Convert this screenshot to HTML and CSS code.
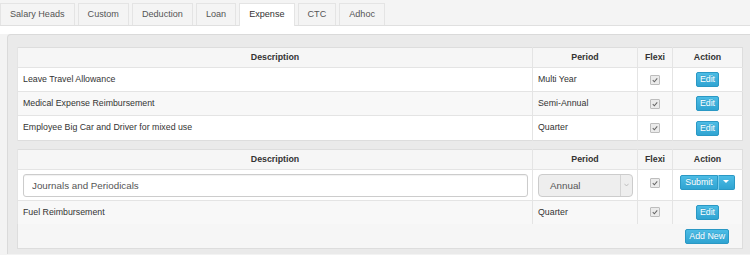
FILE: index.html
```html
<!DOCTYPE html>
<html lang="en">
<head>
    <meta charset="UTF-8">
    <title>Salary Heads - Expense</title>
    <link rel="stylesheet" href="styles.css">
</head>
<body>
    <ul class="tabs">
        <li>Salary Heads</li>
        <li>Custom</li>
        <li>Deduction</li>
        <li>Loan</li>
        <li class="active">Expense</li>
        <li>CTC</li>
        <li>Adhoc</li>
    </ul>

    <div class="tab-content">
        <div class="panel">
            <!-- Saved expense heads -->
            <table class="grid">
                <colgroup>
                    <col class="col-desc"><col class="col-period"><col class="col-flexi"><col class="col-action">
                </colgroup>
                <thead>
                    <tr><th>Description</th><th>Period</th><th>Flexi</th><th>Action</th></tr>
                </thead>
                <tbody>
                    <tr>
                        <td>Leave Travel Allowance</td>
                        <td>Multi Year</td>
                        <td class="center"><span class="check"><svg viewBox="0 0 10 10"><path d="M2.2 5.2 L4.2 7.2 L7.8 3"/></svg></span></td>
                        <td class="center"><span class="btn">Edit</span></td>
                    </tr>
                    <tr class="striped">
                        <td>Medical Expense Reimbursement</td>
                        <td>Semi-Annual</td>
                        <td class="center"><span class="check"><svg viewBox="0 0 10 10"><path d="M2.2 5.2 L4.2 7.2 L7.8 3"/></svg></span></td>
                        <td class="center"><span class="btn">Edit</span></td>
                    </tr>
                    <tr>
                        <td>Employee Big Car and Driver for mixed use</td>
                        <td>Quarter</td>
                        <td class="center"><span class="check"><svg viewBox="0 0 10 10"><path d="M2.2 5.2 L4.2 7.2 L7.8 3"/></svg></span></td>
                        <td class="center"><span class="btn">Edit</span></td>
                    </tr>
                </tbody>
            </table>

            <!-- Editable expense heads -->
            <table class="grid">
                <colgroup>
                    <col class="col-desc"><col class="col-period"><col class="col-flexi"><col class="col-action">
                </colgroup>
                <thead>
                    <tr><th>Description</th><th>Period</th><th>Flexi</th><th>Action</th></tr>
                </thead>
                <tbody>
                    <tr class="edit-row">
                        <td><input class="field" type="text" value="Journals and Periodicals"></td>
                        <td>
                            <div class="select">
                                <span class="select-value">Annual</span>
                                <span class="select-arrow"><svg viewBox="0 0 6 4"><path d="M0.5 0.5 L3 3.2 L5.5 0.5"/></svg></span>
                            </div>
                        </td>
                        <td class="center"><span class="check"><svg viewBox="0 0 10 10"><path d="M2.2 5.2 L4.2 7.2 L7.8 3"/></svg></span></td>
                        <td class="center">
                            <span class="btn-group">
                                <span class="btn btn-main">Submit</span><span class="btn btn-caret"><span class="caret"></span></span>
                            </span>
                        </td>
                    </tr>
                    <tr class="striped">
                        <td>Fuel Reimbursement</td>
                        <td>Quarter</td>
                        <td class="center"><span class="check"><svg viewBox="0 0 10 10"><path d="M2.2 5.2 L4.2 7.2 L7.8 3"/></svg></span></td>
                        <td class="center"><span class="btn">Edit</span></td>
                    </tr>
                    <tr class="footer-row">
                        <td colspan="4"><span class="btn">Add New</span></td>
                    </tr>
                </tbody>
            </table>
        </div>
    </div>
</body>
</html>
```

FILE: styles.css
```css
:root {
    --text-primary: #333333;
    --text-secondary: #555555;
    --border-color: #dddddd;
    --cell-border: #e4e4e4;
    --info-top: #4cbce5;
    --info-bottom: #30a4d2;
    --info-border: #2a98c4;
}

html, body {
    overflow: hidden;
}

body {
    margin: 0;
    font-family: 'Liberation Sans', Arial, sans-serif;
    font-size: 8.8px;
    color: var(--text-primary);
    background: #f3f3f3;
}

/* Tabs */
.tabs {
    display: flex;
    margin: 0;
    padding: 3px 0 0;
    list-style: none;
    background: #f4f4f4;
    border-bottom: 1px solid #e0e0e0;
}

.tabs li {
    margin-right: 3px;
    padding: 0 9px;
    line-height: 21px;
    font-size: 9.1px;
    color: var(--text-secondary);
    border: 1px solid #e4e4e4;
    border-bottom: 0;
}

.tabs li.active {
    background: #ffffff;
    color: var(--text-primary);
    margin-bottom: -1px;
    padding-bottom: 1px;
}

.tab-content {
    border-top: 8px solid #ffffff;
    padding-left: 7px;
}

.panel {
    margin-right: -6px;
    padding: 12px 13px 5px 9px;
    background: #eaeaea;
    border: 1px solid #dadada;
    border-bottom: 0;
    border-radius: 4px 4px 0 0;
}

/* Tables */
.grid {
    width: 100%;
    table-layout: fixed;
    border-collapse: collapse;
    background: #ffffff;
    border: 1px solid var(--border-color);
}

.grid + .grid {
    margin-top: 8px;
}

.col-desc { width: 515px; }
.col-period { width: 105px; }
.col-flexi { width: 35px; }
.col-action { width: 70px; }

.grid th {
    padding: 2px 5px;
    line-height: 15px;
    font-weight: bold;
    text-align: center;
    background: #f6f6f6;
    border-left: 1px solid var(--cell-border);
    border-bottom: 1px solid var(--cell-border);
}

.grid td {
    padding: 4px 4px 4px 5px;
    line-height: 15px;
    vertical-align: middle;
    white-space: nowrap;
    border-left: 1px solid var(--cell-border);
    border-top: 1px solid var(--cell-border);
}

.grid .center {
    text-align: center;
    padding-left: 0;
    padding-right: 0;
}

.grid tr.striped td {
    background: #f8f8f8;
}

.grid tr.edit-row td {
    vertical-align: top;
    padding-bottom: 3px;
}

.grid tr.footer-row td {
    background: #f6f6f6;
    border: 0;
    text-align: right;
    padding: 5px 13px 4px 5px;
}

/* Checkbox */
.check {
    display: inline-block;
    width: 10px;
    height: 10px;
    box-sizing: border-box;
    vertical-align: middle;
    background: #ebebeb;
    border: 1px solid #bdbdbd;
    border-radius: 1px;
}

.check svg {
    display: block;
    width: 8px;
    height: 8px;
    fill: none;
    stroke: #666666;
    stroke-width: 1.3;
}

.edit-row .check {
    margin-top: 4px;
}

/* Buttons */
.btn {
    display: inline-block;
    height: 15px;
    box-sizing: border-box;
    padding: 0 3px;
    line-height: 13px;
    font-size: 8.8px;
    color: #ffffff;
    vertical-align: middle;
    text-shadow: 0 -1px 0 rgba(0, 0, 0, 0.12);
    background: linear-gradient(to bottom, var(--info-top), var(--info-bottom));
    border: 1px solid var(--info-border);
    border-radius: 2px;
}

.btn-group {
    display: inline-flex;
    margin-top: 1px;
}

.btn-main {
    padding: 0 4px;
    border-radius: 2px 0 0 2px;
}

.btn-caret {
    width: 17px;
    border-left: 1px solid #74cbea;
    border-radius: 0 2px 2px 0;
    text-align: center;
}

.caret {
    display: inline-block;
    vertical-align: middle;
    margin-top: -2px;
    border-top: 3px solid #ffffff;
    border-left: 3px solid transparent;
    border-right: 3px solid transparent;
}

/* Form controls */
.field {
    display: block;
    width: 100%;
    height: 23px;
    box-sizing: border-box;
    margin: 0;
    padding: 0 8px;
    font-family: inherit;
    font-size: 9.8px;
    color: var(--text-secondary);
    background: #ffffff;
    border: 1px solid #cccccc;
    border-radius: 3px;
    box-shadow: inset 0 1px 1px rgba(0, 0, 0, 0.06);
}

.select {
    display: flex;
    height: 23px;
    box-sizing: border-box;
    font-size: 9.8px;
    color: var(--text-secondary);
    background: #eeeeee;
    border: 1px solid #cccccc;
    border-radius: 4px;
}

.select-value {
    flex: 1;
    padding-left: 11px;
    line-height: 21px;
}

.select-arrow {
    display: flex;
    align-items: center;
    justify-content: center;
    width: 11px;
    border-left: 1px solid #d4d4d4;
}

.select-arrow svg {
    width: 5px;
    height: 4px;
    fill: none;
    stroke: #aaaaaa;
    stroke-width: 0.8;
}
```
